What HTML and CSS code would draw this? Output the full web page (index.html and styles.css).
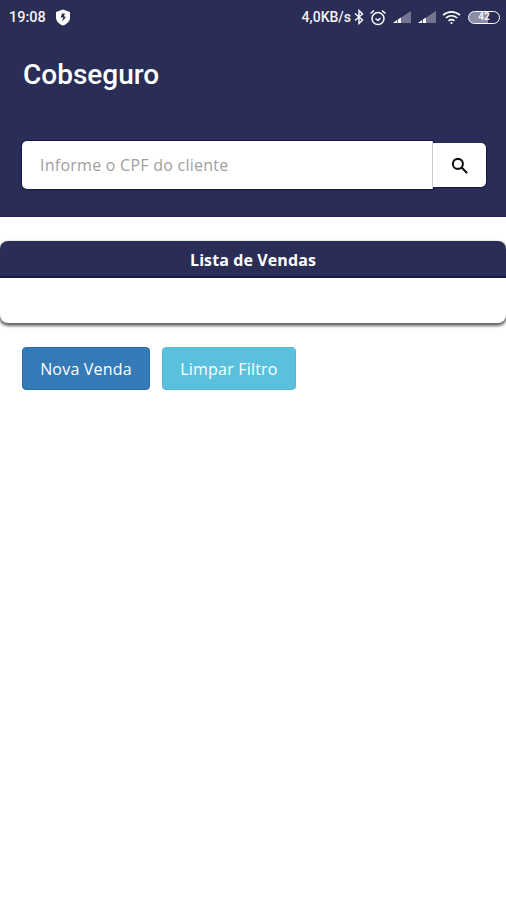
FILE: index.html
```html
<!DOCTYPE html>
<html lang="pt-BR">
<head>
    <meta charset="UTF-8">
    <meta name="viewport" content="width=device-width, initial-scale=1.0">
    <title>Cobseguro</title>
    <link rel="stylesheet" href="styles.css">
</head>
<body>
    <header class="top">
        <div class="status-bar">
            <div class="status-left">
                <span class="clock">19:08</span>
                <svg class="shield" width="16" height="17" viewBox="0 0 16 17">
                    <path d="M8 .5 15 3v5.500c0 3.800-3 6.600-7 8-4-1.400-7-4.200-7-8V3z" fill="#fff"/>
                    <path d="M10 4.500H7L5.800 8.500h2.500L7 12.500l3.500-3.800-.1-1.200H8.800z" fill="#2a2d56"/>
                </svg>
            </div>
            <div class="status-right">
                <span class="speed">4,0KB/s</span>
                <svg width="10" height="16" viewBox="0 0 10 16" fill="none" stroke="#fff" stroke-width="1.400">
                    <path d="M1 4.500 8.500 11 5 14.500V1.500L8.500 5 1 11.500"/>
                </svg>
                <svg class="alarm" width="18" height="17" viewBox="0 0 18 17" fill="none" stroke="#fff" stroke-width="1.500">
                    <circle cx="9" cy="9.500" r="6"/>
                    <path d="M6.500 9.500 9 11.500l2.500-2.500M1.500 4.500 5 1.500M16.500 4.500 13 1.500"/>
                </svg>
                <svg class="signal" width="20" height="14" viewBox="0 0 20 14">
                    <path d="M19 1v12H1z" fill="#fff" opacity=".35"/>
                    <path d="M1 13l4-3 0 3zM6 9.500l3-2V13H6z" fill="#fff"/>
                </svg>
                <svg class="signal" width="20" height="14" viewBox="0 0 20 14">
                    <path d="M19 1v12H1z" fill="#fff" opacity=".35"/>
                    <path d="M1 13l4-3 0 3zM6 9.500l3-2V13H6z" fill="#fff"/>
                </svg>
                <svg class="wifi" width="19" height="15" viewBox="0 0 19 15" fill="none" stroke="#fff" stroke-width="1.600">
                    <path d="M1 5.200c5-4.400 12-4.400 17 0M3.800 8c3.400-2.900 8-2.900 11.400 0M6.500 10.800c1.800-1.400 4.200-1.400 6 0"/>
                    <circle cx="9.500" cy="13" r="1.100" fill="#fff" stroke="none"/>
                </svg>
                <span class="battery">42</span>
            </div>
        </div>
        <div class="toolbar">Cobseguro</div>
        <form class="search">
            <input class="search-input" type="text" placeholder="Informe o CPF do cliente">
            <button class="search-btn" type="button" aria-label="Buscar">
                <svg width="17" height="17" viewBox="0 0 18 18" fill="none" stroke="#111" stroke-width="2.200">
                    <circle cx="7.300" cy="7.300" r="5.300"/>
                    <path d="m11.200 11.200 5.300 5.300" stroke-linecap="round"/>
                </svg>
            </button>
        </form>
    </header>

    <section class="card">
        <h2 class="card-title">Lista de Vendas</h2>
        <div class="card-body"></div>
    </section>

    <div class="actions">
        <button class="btn btn-primary" type="button">Nova Venda</button>
        <button class="btn btn-info" type="button">Limpar Filtro</button>
    </div>
</body>
</html>
```

FILE: styles.css
```css
/* Page */
html, body {
    height: 100%;
}

body {
    margin: 0;
    background: #fff;
    color: #fff;
    font-family: "Open Sans", "Noto Sans", sans-serif;
}

/* Dark header with status bar, title and search */
.top {
    height: 217px;
    background: #2a2d56;
    border-bottom: 1px solid #20224a;
    box-sizing: border-box;
}

.status-bar {
    height: 35px;
    display: flex;
    align-items: center;
    justify-content: space-between;
    padding: 0 6px 1px 9px;
    box-sizing: border-box;
    font-family: Roboto, sans-serif;
    font-size: 14px;
    font-weight: 500;
    color: #f2f2f5;
}

.status-left, .status-right {
    display: flex;
    align-items: center;
}

.status-left {
    gap: 9px;
}

.clock {
    font-size: 14.500px;
}

.status-right {
    gap: 3px;
}

.alarm, .signal, .wifi {
    margin-left: 2px;
}

.battery {
    width: 32px;
    height: 13px;
    margin-left: 4px;
    box-sizing: border-box;
    border: 1.500px solid #fff;
    border-radius: 7px;
    background: linear-gradient(to right, #8b8ca6 62%, transparent 62%);
    font-size: 10px;
    font-weight: 700;
    line-height: 10px;
    text-align: center;
}

.toolbar {
    height: 78px;
    padding: 4px 23px 2px;
    box-sizing: border-box;
    border-bottom: 1px solid #262950;
    display: flex;
    align-items: center;
    font-family: Roboto, sans-serif;
    font-size: 28px;
    font-weight: 500;
}

.search {
    display: flex;
    align-items: center;
    padding: 28px 20px 0 22px;
}

.search-input {
    width: 411px;
    height: 48px;
    padding: 0 18px;
    box-sizing: border-box;
    border: 0;
    border-right: 1px solid #ccc;
    border-radius: 5px 0 0 5px;
    background: #fff;
    box-shadow: 0 0 1px 1px #14164a;
    font-family: inherit;
    font-size: 16px;
    letter-spacing: 0.25px;
    outline: none;
}

.search-input::placeholder {
    color: #a0a0a0;
}

.search-btn {
    width: 53px;
    height: 44px;
    padding: 0;
    border: 0;
    border-radius: 0 5px 5px 0;
    background: #fff;
    box-shadow: 1px 1px 1px #14164a;
    display: flex;
    align-items: center;
    justify-content: center;
}

/* Sales list card */
.card {
    height: 82px;
    margin-top: 24px;
    border-radius: 8px;
    background: #fff;
    box-shadow: 0 2px 3px 1px rgba(0, 0, 0, 0.6);
}

.card-title {
    height: 37px;
    margin: 0;
    box-sizing: border-box;
    border-radius: 8px 8px 0 0;
    border-bottom: 2px solid #171a45;
    background: #2a2d56;
    font-size: 16px;
    font-weight: 700;
    letter-spacing: 0.1px;
    line-height: 38px;
    text-align: center;
}

/* Buttons under the card */
.actions {
    display: flex;
    gap: 12px;
    margin-top: 24px;
    padding-left: 22px;
}

.btn {
    height: 43px;
    box-sizing: border-box;
    border: 1px solid;
    border-radius: 4px;
    color: #fff;
    font-family: inherit;
    font-size: 16px;
    letter-spacing: 0.2px;
}

.btn-primary {
    width: 128px;
    background: #337ab7;
    border-color: #2e6da4;
}

.btn-info {
    width: 134px;
    background: #5bc0de;
    border-color: #55b8d6;
}
```
